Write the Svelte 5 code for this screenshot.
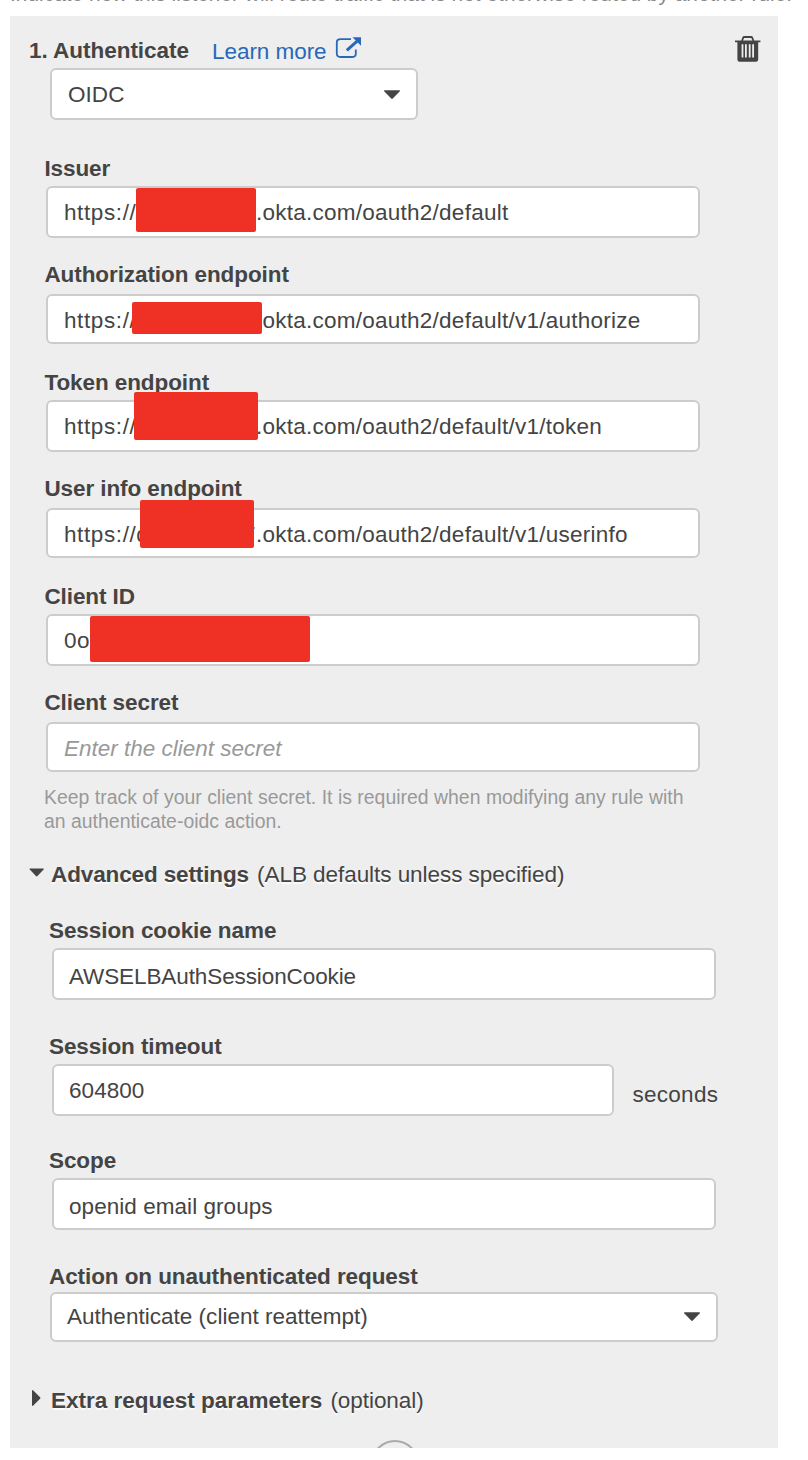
<script>
  const endpoints = [
    { label: 'Issuer', start: 'https://', end: '.okta.com/oauth2/default', gap: 6, height: 52, after: 24, mask: [136, 188, 120, 44], top: 186 },
    { label: 'Authorization endpoint', start: 'https://', end: '.okta.com/oauth2/default/v1/authorize', gap: 8, height: 50, after: 26, drop: true, mask: [132, 302, 130, 32], top: 294 },
    { label: 'Token endpoint', start: 'https://', end: '.okta.com/oauth2/default/v1/token', gap: 6, height: 52, after: 24, mask: [134, 392, 124, 48], top: 400 },
    { label: 'User info endpoint', start: 'https://d', tail: '7', end: '.okta.com/oauth2/default/v1/userinfo', gap: 8, height: 50, after: 26, drop: true, mask: [140, 500, 114, 48], top: 508 },
    { label: 'Client ID', start: '0o', end: '', gap: 6, height: 52, after: 24, mask: [90, 616, 220, 46], top: 614 }
  ];
</script>

<div class="page">
  <div class="intro"><p>Indicate how this listener will route traffic that is not otherwise routed by another rule.</p></div>

  <section class="panel">
    <header>
      <h2>1. Authenticate</h2>
      <a href="#learn">Learn more</a>
      <svg class="external" width="28" height="24" viewBox="0 0 28 24" fill="none">
        <path d="M16 3.2H5.5Q1.8 3.2 1.8 6.5V17.5Q1.8 21 5.5 21H17.5Q20.8 21 20.8 17.5V13.5" stroke="#2768b8" stroke-width="1.8" />
        <path d="M11.8 14.3L23 4.4" stroke="#2768b8" stroke-width="3" />
        <path d="M17.5 1.2H26V9.8Z" fill="#2768b8" />
      </svg>
      <svg class="trash" width="28" height="28" viewBox="0 0 28 28">
        <path d="M8 5L9.2 1.6Q9.5 1 10.2 1H17.2Q17.9 1 18.2 1.6L19.4 5" fill="none" stroke="#444" stroke-width="1.8" />
        <path d="M1 4.4H26.4V6.2H24.2V23.5Q24.2 25.8 21.8 25.8H5.7Q3.4 25.8 3.4 23.5V6.2H1Z" fill="#444" />
        <path d="M7.6 8.3H9.4V21.6H7.6ZM11 8.3H12.8V21.6H11ZM14.8 8.3H16.6V21.6H14.8ZM18.2 8.3H20V21.6H18.2Z" fill="#eee" />
      </svg>
    </header>

    <div class="box select provider"><span>OIDC</span><svg width="18" height="12" viewBox="0 0 18 12"><path d="M1.3 1.2H16.7Q17.2 1.8 16.6 2.5L9.8 9.5Q9 10.3 8.2 9.5L1.4 2.5Q.8 1.8 1.3 1.2Z" fill="#444" /></svg></div>

    <div class="client">
      {#each endpoints as f}
        <div class="field" style:gap="{f.gap}px" style:margin-bottom="{f.after}px">
          <div class="label">{f.label}</div>
          <div class="box" class:drop={f.drop} style:height="{f.height}px">
            <span class="start"><span>{f.start}</span>{#if f.tail}<span>{f.tail}</span>{/if}</span>
            <span class="end">{f.end}</span>
            <i class="mask" style:left="{f.mask[0] - 48}px" style:top="{f.mask[1] - f.top - 2}px" style:width="{f.mask[2]}px" style:height="{f.mask[3]}px"></i>
          </div>
        </div>
      {/each}
      <div class="field secret">
        <div class="label">Client secret</div>
        <div class="box drop"><span class="placeholder">Enter the client secret</span></div>
      </div>
      <p class="hint">Keep track of your client secret. It is required when modifying any rule with<br />an authenticate-oidc action.</p>
    </div>

    <div class="toggle">
      <svg width="16" height="12" viewBox="0 0 16 12"><path d="M.9 1.4H14.5Q15.1 1.8 14.6 2.6L8.5 9Q7.7 9.8 6.9 9L.8 2.6Q.2 1.8 .9 1.4Z" fill="#444" /></svg>
      <b>Advanced settings</b><span>(ALB defaults unless specified)</span>
    </div>

    <div class="advanced">
      <div class="field cookie">
        <div class="label">Session cookie name</div>
        <div class="box low"><span class="tight">AWSELBAuthSessionCookie</span></div>
      </div>
      <div class="field timeout">
        <div class="label">Session timeout</div>
        <div class="row"><div class="box"><span>604800</span></div><span class="unit">seconds</span></div>
      </div>
      <div class="field scope">
        <div class="label">Scope</div>
        <div class="box low"><span>openid email groups</span></div>
      </div>
      <div class="field action">
        <div class="label">Action on unauthenticated request</div>
        <div class="box select"><span>Authenticate (client reattempt)</span><svg width="18" height="12" viewBox="0 0 18 12"><path d="M1.3 1.2H16.7Q17.2 1.8 16.6 2.5L9.8 9.5Q9 10.3 8.2 9.5L1.4 2.5Q.8 1.8 1.3 1.2Z" fill="#444" /></svg></div>
      </div>
    </div>

    <div class="toggle">
      <svg class="closed" width="16" height="20" viewBox="0 0 16 20"><path d="M3 1.4Q3.5 .8 4.3 1.4L11.1 8.2Q11.9 9 11.1 9.8L4.3 16.6Q3.5 17.2 3 16.6Z" fill="#444" /></svg>
      <b>Extra request parameters</b><span>(optional)</span>
    </div>

    <div class="add"></div>
  </section>
</div>

<style>
  :global(body) { background: #fff; }
  .page {
    width: 808px; height: 1460px; overflow: hidden;
    font: 22.5px/24px "Liberation Sans", Arial, sans-serif;
    letter-spacing: 0.05px; color: #444; white-space: nowrap;
  }
  .page, .page * { box-sizing: border-box; }
  p, h2 { margin: 0; }
  .intro { height: 16px; overflow: hidden; padding-left: 10px; font-size: 20.8px; letter-spacing: 0.05px; color: #888; }
  .intro p { margin-top: -18px; }
  .panel { width: 768px; height: 1432px; margin-left: 10px; padding-top: 20px; background: #eee; overflow: hidden; }
  header { display: flex; height: 32px; padding-left: 19px; align-items: flex-start; }
  h2 { width: 183px; margin-top: 3px; font-size: 22.5px; line-height: 24px; letter-spacing: -0.03px; }
  a { width: 123px; margin-top: 4px; color: #2768b8; text-decoration: none; letter-spacing: -0.05px; }
  .trash { margin-left: auto; margin-right: 16px; overflow: visible; }
  .box {
    position: relative; display: flex; flex-shrink: 0; align-items: center; height: 52px;
    padding: 2px 0 0 16px; background: #fff; border: 2px solid #ccc; border-radius: 6px;
  }
  .select { justify-content: space-between; padding-right: 15px; }
  .select svg { margin-top: -1px; }
  .provider { width: 368px; margin-left: 40px; }
  .client { width: 654px; margin: 36px 0 0 36px; }
  .field { display: flex; flex-direction: column; gap: 6px; }
  .label { height: 24px; margin-left: -1.6px; line-height: 26px; font-weight: bold; letter-spacing: -0.08px; }
  .drop { padding-top: 4px; }
  .low { padding-top: 6px; }
  .start { display: flex; justify-content: space-between; width: 192px; letter-spacing: 0.6px; }
  .end { letter-spacing: 0.25px; }
  .mask { position: absolute; background: #ee3124; border-radius: 2px; }
  .secret { gap: 8px; }
  .secret .box { height: 50px; }
  .placeholder { font-style: italic; color: #999; letter-spacing: 0; }
  .hint { margin: 13px 0 0 -2px; font-size: 19.4px; letter-spacing: 0.02px; color: #999; }
  .toggle { display: flex; height: 24px; line-height: 26px; margin: 29px 0 0 19px; text-shadow: 0 2px 1px rgba(255, 255, 255, 0.8); }
  .toggle svg { margin: 5px 6px 0 0; }
  .toggle .closed { margin-top: 1px; }
  .toggle b { margin-right: 8px; letter-spacing: -0.12px; }
  .toggle .closed + b { letter-spacing: 0; }
  .toggle span { letter-spacing: -0.05px; }
  .advanced { width: 664px; margin: 32px 0 0 42px; }
  .advanced .label { margin-left: -3px; }
  .advanced .box { padding-left: 15px; }
  .tight { letter-spacing: -0.1px; }
  .timeout { margin-top: 34px; }
  .row { display: flex; align-items: center; }
  .row .box { width: 562px; }
  .unit { margin: 10px 0 0 18.6px; letter-spacing: 0.25px; }
  .scope { margin-top: 32px; }
  .action { margin-top: 34px; gap: 4px; }
  .action .box { width: 668px; height: 50px; margin-left: -2px; padding-top: 0; }
  .action .box span { letter-spacing: 0.02px; }
  .advanced + .toggle { margin-top: 46px; }
  .add { width: 48px; height: 48px; margin: 28px 0 0 361px; border: 2px solid #aaa; border-radius: 50%; }
</style>
